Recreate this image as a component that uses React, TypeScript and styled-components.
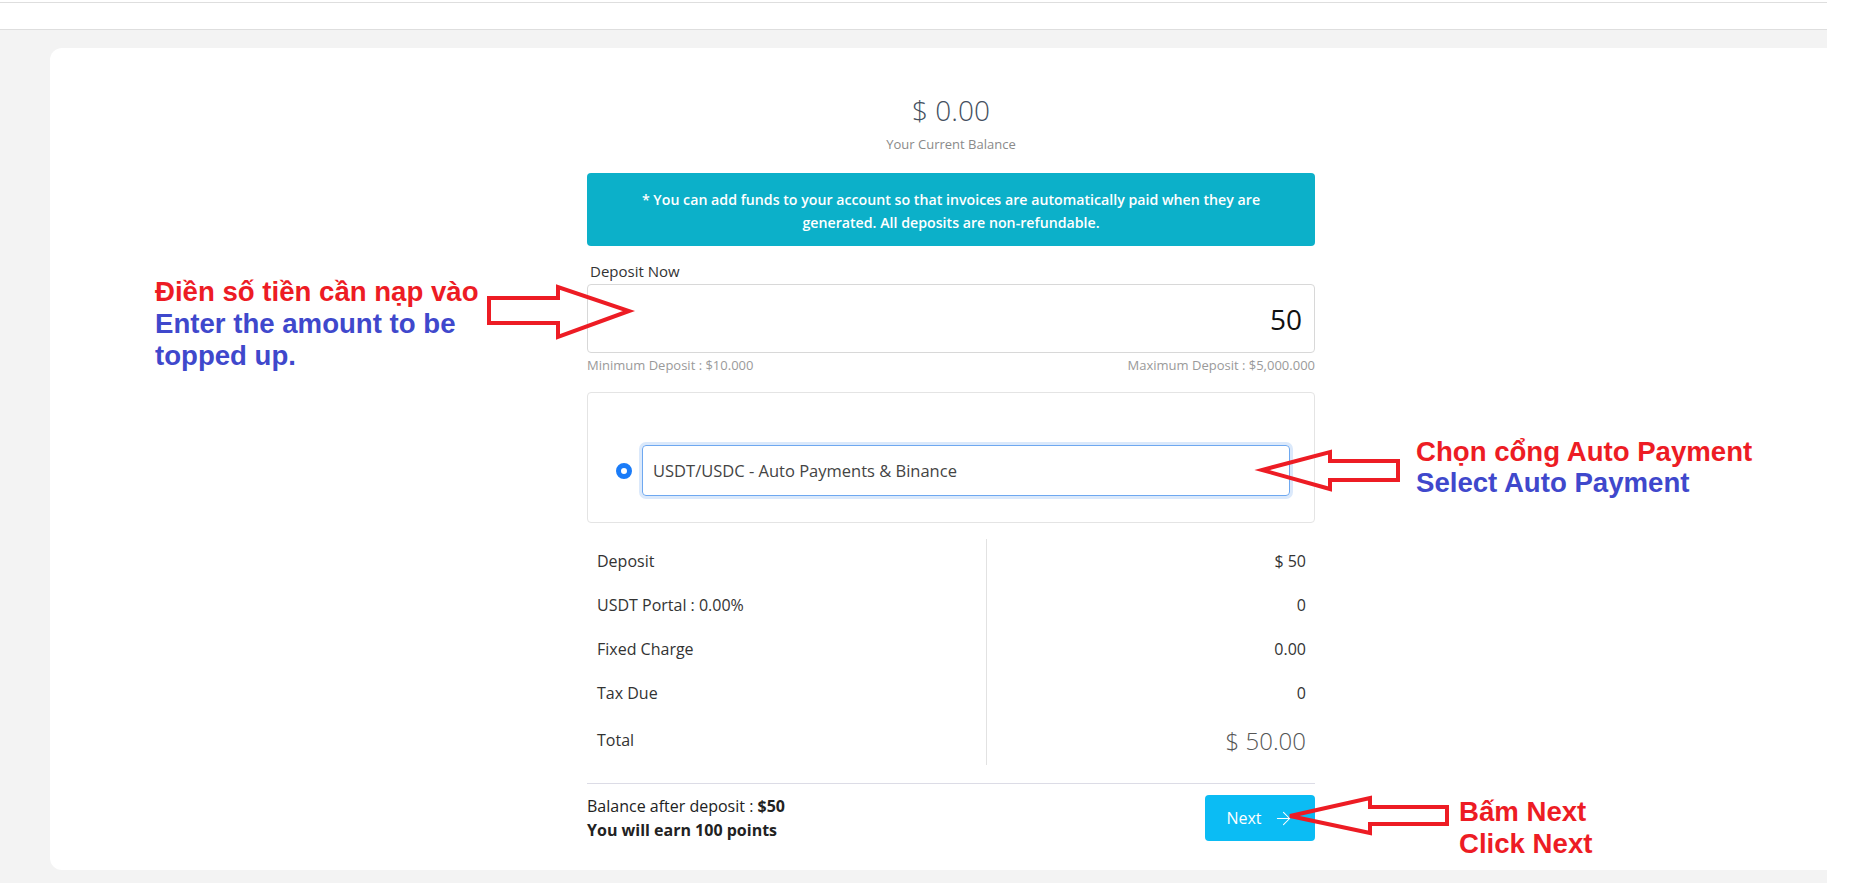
import React from 'react';
import styled, { createGlobalStyle } from 'styled-components';
import { ArrowRight } from 'lucide-react';

const GlobalStyle = createGlobalStyle`
  html, body {
    margin: 0;
    padding: 0;
    background: #fff;
  }

  body {
    font-family: "Open Sans", "Noto Sans", sans-serif;
    color: #333;
  }

  * {
    box-sizing: border-box;
  }
`;

const Shell = styled.div`
  position: relative;
  width: 1876px;
  height: 883px;
  overflow: hidden;
`;

const Frame = styled.div`
  width: 1827px;
`;

const TopBar = styled.header`
  margin-top: 2px;
  height: 28px;
  background: #fff;
  border-top: 1px solid #dedede;
  border-bottom: 1px solid #dedede;
`;

const Main = styled.main`
  background: #f3f3f3;
  padding: 18px 0 13px 50px;
`;

const Card = styled.section`
  height: 822px;
  background: #fff;
  border-radius: 12px 0 0 12px;
  display: flex;
  justify-content: center;
  padding: 42px 0 0 25px;
`;

const Column = styled.div`
  width: 728px;
  display: flex;
  flex-direction: column;
`;

const BalanceAmount = styled.div`
  text-align: center;
  font-size: 28px;
  font-weight: 300;
  line-height: 40px;
  color: #44505e;
`;

const BalanceCaption = styled.div`
  margin-top: 5px;
  text-align: center;
  font-size: 13px;
  line-height: 18px;
  color: #8a8a8a;
`;

const Notice = styled.div`
  margin-top: 20px;
  padding: 15px 20px 12px;
  background: #0cb0c9;
  border-radius: 4px;
  color: #fff;
  font-size: 14.2px;
  font-weight: 600;
  line-height: 23px;
  text-align: center;
`;

const FieldLabel = styled.label`
  margin-top: 16px;
  padding-left: 3px;
  font-size: 15px;
  line-height: 18px;
  color: #333;
`;

const AmountInput = styled.input`
  margin-top: 4px;
  width: 100%;
  height: 69px;
  padding: 0 12px;
  border: 1px solid #d8d8d8;
  border-radius: 4px;
  font-family: inherit;
  font-size: 28px;
  color: #111;
  text-align: right;
  outline: none;
`;

const LimitsRow = styled.div`
  margin-top: 4px;
  display: flex;
  justify-content: space-between;
  font-size: 13px;
  line-height: 16px;
  color: #9a9a9a;
`;

const GatewayBox = styled.div`
  margin-top: 19px;
  height: 131px;
  padding: 52px 24px 0 28px;
  border: 1px solid #e4e4e4;
  border-radius: 4px;
`;

const GatewayOption = styled.div`
  display: flex;
  align-items: center;
  gap: 10px;
  height: 51px;
`;

const Radio = styled.span`
  width: 16px;
  height: 16px;
  flex: none;
  border-radius: 50%;
  border: 5px solid #1b7cf8;
  background: #fff;
`;

const GatewaySelect = styled.div`
  flex: 1;
  height: 51px;
  display: flex;
  align-items: center;
  padding-left: 10px;
  border: 1px solid #6ea8f0;
  border-radius: 4px;
  box-shadow: 0 0 0 3px #dbe9fb;
  font-size: 16.5px;
  color: #444;
`;

const Summary = styled.div`
  margin-top: 16px;
  display: grid;
  grid-template-columns: 400px 1fr;
`;

const SummaryCell = styled.div<{ $side: 'label' | 'value'; $big?: boolean }>`
  height: ${({ $big }) => ($big ? '50px' : '44px')};
  display: flex;
  align-items: center;
  justify-content: ${({ $side }) => ($side === 'label' ? 'flex-start' : 'flex-end')};
  padding: ${({ $side }) => ($side === 'label' ? '0 0 0 10px' : '0 9px 0 0')};
  border-right: ${({ $side }) => ($side === 'label' ? '1px solid #e2e2e2' : 'none')};
  font-size: ${({ $big, $side }) => ($big && $side === 'value' ? '24px' : '16px')};
  font-weight: ${({ $big, $side }) => ($big && $side === 'value' ? 300 : 400)};
  color: ${({ $big, $side }) => ($big && $side === 'value' ? '#555' : '#333')};
`;

const Rule = styled.hr`
  margin: 18px 0 0;
  border: none;
  border-top: 1px solid #dcdce6;
`;

const Footer = styled.div`
  margin-top: 10px;
  display: flex;
  justify-content: space-between;
  align-items: center;
`;

const FooterText = styled.div`
  font-size: 16px;
  line-height: 24px;
  color: #222;

  & strong {
    font-weight: 700;
  }
`;

const NextButton = styled.button`
  width: 110px;
  height: 46px;
  display: inline-flex;
  align-items: center;
  justify-content: center;
  gap: 11px;
  border: none;
  border-radius: 4px;
  background: #0bbcf4;
  color: #fff;
  font-family: inherit;
  font-size: 16px;
`;

const Callout = styled.div<{ $x: number; $y: number; $lh: number }>`
  position: absolute;
  left: ${({ $x }) => $x}px;
  top: ${({ $y }) => $y}px;
  font-family: "Liberation Sans", Arial, sans-serif;
  font-weight: 700;
  font-size: 27.6px;
  line-height: ${({ $lh }) => $lh}px;
  white-space: nowrap;
`;

const CalloutLine = styled.div<{ $tone: 'red' | 'blue' }>`
  color: ${({ $tone }) => ($tone === 'red' ? '#ed1c24' : '#3f48cc')};
`;

const ArrowLayer = styled.svg`
  position: absolute;
  left: 0;
  top: 0;
  pointer-events: none;
`;

const rows = [
  { label: 'Deposit', value: '$ 50' },
  { label: 'USDT Portal : 0.00%', value: '0' },
  { label: 'Fixed Charge', value: '0.00' },
  { label: 'Tax Due', value: '0' },
  { label: 'Total', value: '$ 50.00', big: true },
];

const arrows = [
  '489,298 558,298 558,287 629,311 558,337 558,323 489,323',
  '1398,461 1330,461 1330,452 1262,470 1330,489 1330,480 1398,480',
  '1447,807 1370,807 1370,798 1290,816 1370,833 1370,824 1447,824',
];

export default function App() {
  return (
    <Shell>
      <GlobalStyle />
      <Frame>
        <TopBar />
        <Main>
          <Card>
            <Column>
              <BalanceAmount>$ 0.00</BalanceAmount>
              <BalanceCaption>Your Current Balance</BalanceCaption>
              <Notice>
                * You can add funds to your account so that invoices are automatically paid when they are
                <br />
                generated. All deposits are non-refundable.
              </Notice>
              <FieldLabel>Deposit Now</FieldLabel>
              <AmountInput defaultValue="50" />
              <LimitsRow>
                <span>Minimum Deposit : $10.000</span>
                <span>Maximum Deposit : $5,000.000</span>
              </LimitsRow>
              <GatewayBox>
                <GatewayOption>
                  <Radio />
                  <GatewaySelect>USDT/USDC - Auto Payments &amp; Binance</GatewaySelect>
                </GatewayOption>
              </GatewayBox>
              <Summary>
                {rows.map((row) => (
                  <React.Fragment key={row.label}>
                    <SummaryCell $side="label" $big={row.big}>{row.label}</SummaryCell>
                    <SummaryCell $side="value" $big={row.big}>{row.value}</SummaryCell>
                  </React.Fragment>
                ))}
              </Summary>
              <Rule />
              <Footer>
                <FooterText>
                  Balance after deposit : <strong>$50</strong>
                  <br />
                  <strong>You will earn 100 points</strong>
                </FooterText>
                <NextButton>
                  Next
                  <ArrowRight size={21} strokeWidth={1.2} />
                </NextButton>
              </Footer>
            </Column>
          </Card>
        </Main>
      </Frame>

      <ArrowLayer width={1876} height={883} viewBox="0 0 1876 883">
        {arrows.map((points) => (
          <polygon key={points} points={points} fill="none" stroke="#ed1c24" strokeWidth={4} strokeLinejoin="miter" />
        ))}
      </ArrowLayer>

      <Callout $x={155} $y={276} $lh={32}>
        <CalloutLine $tone="red">Điền số tiền cần nạp vào</CalloutLine>
        <CalloutLine $tone="blue">Enter the amount to be</CalloutLine>
        <CalloutLine $tone="blue">topped up.</CalloutLine>
      </Callout>
      <Callout $x={1416} $y={436} $lh={31}>
        <CalloutLine $tone="red">Chọn cổng Auto Payment</CalloutLine>
        <CalloutLine $tone="blue">Select Auto Payment</CalloutLine>
      </Callout>
      <Callout $x={1459} $y={796} $lh={32}>
        <CalloutLine $tone="red">Bấm Next</CalloutLine>
        <CalloutLine $tone="red">Click Next</CalloutLine>
      </Callout>
    </Shell>
  );
}
